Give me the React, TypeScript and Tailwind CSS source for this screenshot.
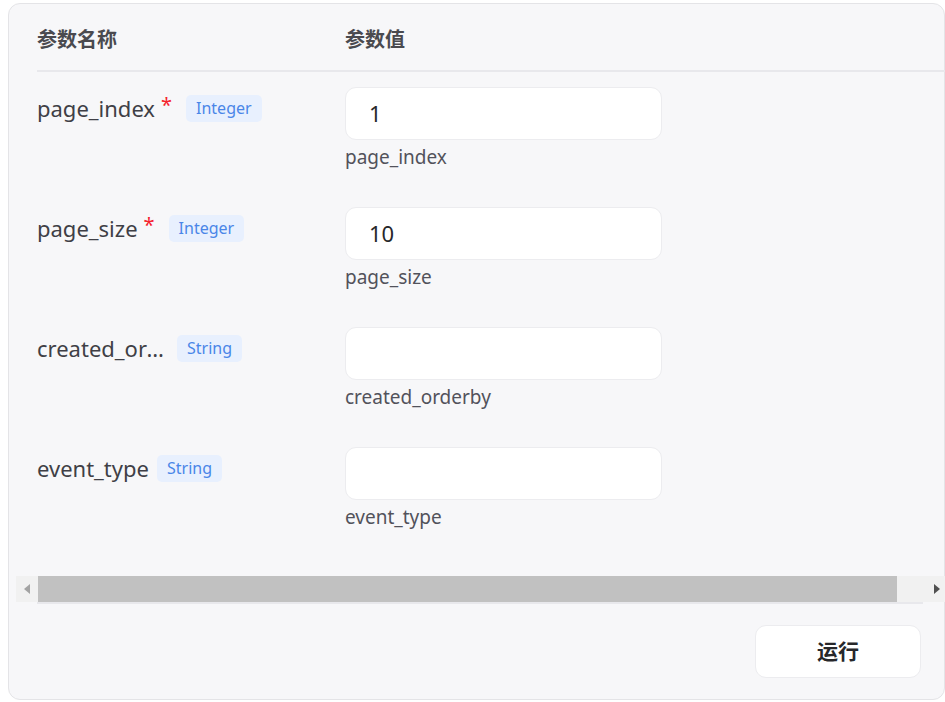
import React from 'react';

const params = [
  { name: 'page_index', required: true, type: 'Integer', value: '1' },
  { name: 'page_size', required: true, type: 'Integer', value: '10' },
  { name: 'created_orderby', required: false, type: 'String', value: '' },
  { name: 'event_type', required: false, type: 'String', value: '' },
];

const App: React.FC = () => {
  return (
    <div
      className="w-[945px] h-[702px] bg-white pl-[8px] pt-[3px] overflow-hidden"
      style={{ fontFamily: '"Noto Sans", "Noto Sans CJK SC", sans-serif' }}
    >
      <div className="w-[937px] h-[697px] bg-[#f7f7f9] border border-[#e4e4e7] rounded-[12px] flex flex-col">
        {/* Table area */}
        <div className="ml-[7px] pl-[21px] w-[929px]">
          <div className="flex items-center h-[68px] pt-[6px] border-b-2 border-[#e8e8ec] text-[20px] font-bold text-[#4a4a4f]">
            <div className="w-[308px]">参数名称</div>
            <div>参数值</div>
          </div>

          {params.map((p) => (
            <div key={p.name} className="flex h-[120px] pt-[15px]">
              <div className="w-[308px] flex items-start">
                <div className="flex items-center h-[42px]">
                  <span className="text-[22px] text-[#3f3f46] max-w-[132px] truncate leading-[30px]">{p.name}</span>
                  {p.required && <span className="text-[#f5222d] text-[20px] ml-[6px] -mt-[6px]">*</span>}
                  <span
                    className={`${p.required ? 'ml-[14px]' : 'ml-[8px]'} h-[27px] px-[10px] rounded-[5px] bg-[#e8f0fe] text-[#4a86e8] text-[16px] flex items-center`}
                  >
                    {p.type}
                  </span>
                </div>
              </div>
              <div className="flex flex-col">
                <div className="w-[317px] h-[53px] bg-white border border-[#ececef] rounded-[11px] flex items-center pl-[23px] text-[22px] text-[#27272a]">
                  {p.value}
                </div>
                <div className="mt-[3px] text-[19px] text-[#52525b] leading-[28px]">{p.name}</div>
              </div>
            </div>
          ))}
        </div>

        {/* Horizontal scrollbar */}
        <div className="mt-[24px] ml-[7px] h-[26px] w-[929px] bg-[#f1f1f1] flex items-center">
          <div className="w-[22px] h-full flex items-center justify-center">
            <div className="w-0 h-0 border-y-[5px] border-y-transparent border-r-[6px] border-r-[#a3a3a3]" />
          </div>
          <div className="h-full w-[859px] bg-[#c1c1c1]" />
          <div className="flex-1 h-full flex items-center justify-end pr-[5px]">
            <div className="w-0 h-0 border-y-[5px] border-y-transparent border-l-[6px] border-l-[#505050]" />
          </div>
        </div>
        <div className="ml-[28px] w-[886px] h-[2px] bg-[#e8e8ec]" />

        {/* Footer */}
        <div className="flex justify-end pr-[23px] pt-[21px]">
          <button className="w-[166px] h-[53px] bg-white border border-[#ececef] rounded-[11px] text-[21px] font-bold text-[#27272a]">
            运行
          </button>
        </div>
      </div>
    </div>
  );
};

export default App;
